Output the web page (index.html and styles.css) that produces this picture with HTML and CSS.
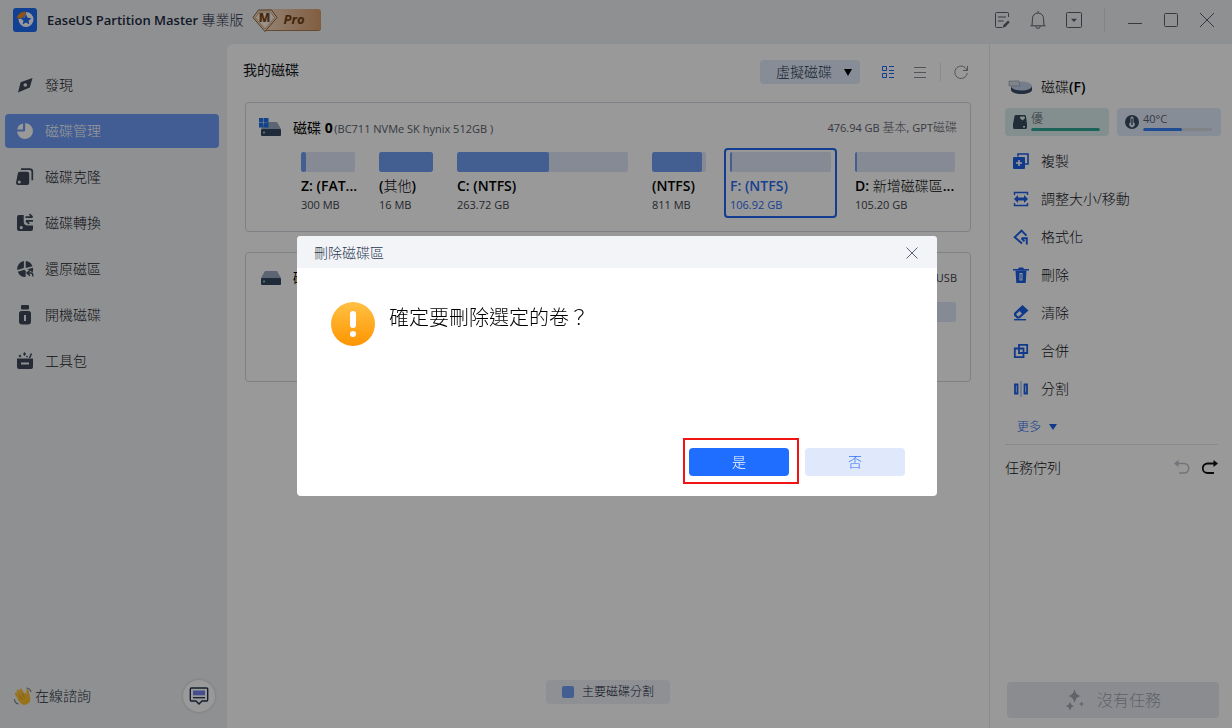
FILE: index.html
```html
<!DOCTYPE html>
<html lang="zh-Hant">
<head>
<meta charset="utf-8">
<title>EaseUS Partition Master</title>
<link rel="stylesheet" href="styles.css">
</head>
<body>
<div class="app">
  <header class="titlebar">
    <svg class="logo" viewBox="0 0 24 24" width="24" height="24"><rect width="24" height="24" rx="3" fill="#1f6bf5"/><circle cx="13" cy="11.500" r="7.500" fill="#fff"/><path d="M13 6.300l1.600 3.500 3.800.4-2.900 2.600.9 3.800-3.400-2-3.400 2 .9-3.800-2.900-2.600 3.800-.4z" fill="#1f6bf5"/><path d="M3.400 10.500A8.600 8.600 0 0 1 12.600 3.400V6L10.800 9.400 7.200 10.500z" fill="#f08a1c" stroke="#1f6bf5" stroke-width=".6"/></svg>
    <h1 class="product">EaseUS Partition Master <span>專業版</span></h1>
    <div class="pro">
      <span class="pro-label">Pro</span>
      <svg class="gem" viewBox="0 0 26 24" width="26" height="24"><path d="M6.500 1h13L25 8.500 13 22.500 1 8.500z" fill="#f7e3d2" stroke="#8a5a30" stroke-width="1"/><path d="M7.300 3h11.400l4 5.700L13 20 3.300 8.700z" fill="#fdf0e4" stroke="#c08a5c" stroke-width=".8"/></svg>
      <b class="gem-letter">M</b>
    </div>
    <div class="window-tools">
      <button aria-label="記錄"><svg viewBox="0 0 20 20" width="20" height="20"><path d="M16.500 7V3.500a1 1 0 0 0-1-1h-11a1 1 0 0 0-1 1v13a1 1 0 0 0 1 1h6M6 7h8M6 11h5.500"/><path d="M10.800 17.500l.6-2.600 4.700-4.400 1.600 1.800-4.500 4.600z" fill="#5b6069" stroke="none"/></svg></button>
      <button aria-label="通知"><svg viewBox="0 0 20 20" width="20" height="20"><path d="M10 1v1.500M2.500 15.800h15M4 15.800l.5-7.300a5.500 5.500 0 0 1 11 0l.5 7.300M7.800 16.200a2.200 2.200 0 0 0 4.400 0"/></svg></button>
      <button aria-label="選單"><svg viewBox="0 0 20 20" width="20" height="20"><rect x="2.500" y="2.500" width="15" height="15" rx="1"/><path d="M7 8.800h6L10 12z" fill="#5b6069" stroke="none"/></svg></button>
      <span class="tool-divider"></span>
      <button aria-label="最小化"><svg viewBox="0 0 20 20" width="20" height="20"><path d="M3 13.500h14"/></svg></button>
      <button aria-label="最大化"><svg viewBox="0 0 20 20" width="20" height="20"><rect x="3.500" y="3.500" width="13" height="13" rx="1"/></svg></button>
      <button aria-label="關閉"><svg viewBox="0 0 20 20" width="20" height="20"><path d="M3 3l14 14M17 3L3 17"/></svg></button>
    </div>
  </header>

  <div class="workspace">
    <nav class="sidebar">
      <ul class="nav-list">
        <li><a class="nav-item" href="#"><svg viewBox="0 0 20 20" width="20" height="20"><path fill-rule="evenodd" d="M17.500 3L14.800 12.600 3 17.500 5.600 7.300zM10.300 8.200a1.800 1.800 0 1 0 0 3.600 1.800 1.800 0 0 0 0-3.600z"/></svg>發現</a></li>
        <li><a class="nav-item active" href="#"><svg viewBox="0 0 20 20" width="20" height="20"><path d="M10.200 2A8 8 0 1 1 2 10.500h6.700a1.500 1.500 0 0 0 1.500-1.500z"/><path d="M8 2.500v5.200a.7.7 0 0 1-.7.700H2.200A7.500 7.500 0 0 1 8 2.500z"/></svg>磁碟管理</a></li>
        <li><a class="nav-item" href="#"><svg viewBox="0 0 20 20" width="20" height="20"><path fill-rule="evenodd" d="M4.800 4.700h7.400a2 2 0 0 1 2 2V16a2 2 0 0 1-2 2H3a2 2 0 0 1-2-2l1.800-9.500a2 2 0 0 1 2-1.800zM4.300 13.600a1.500 1.500 0 1 0 0 3 1.500 1.500 0 0 0 0-3z"/><path d="M6 2.100h8.700a2.600 2.600 0 0 1 2.600 2.500v8.600" fill="none" stroke="#3f4658" stroke-width="1.700"/></svg>磁碟克隆</a></li>
        <li><a class="nav-item" href="#"><svg viewBox="0 0 20 20" width="20" height="20"><path fill-rule="evenodd" d="M4 2h4.700v6.500a4 4 0 0 0 4 4H18V16a2 2 0 0 1-2 2H4a2 2 0 0 1-2-2V4a2 2 0 0 1 2-2zM6.300 13a1.600 1.600 0 1 0 0 3.200 1.600 1.600 0 0 0 0-3.200z"/><path d="M10.500 4.200h7M14.500 1.200l3 3M18 7.800h-7M11 7.800l3.300 3" fill="none" stroke="#3f4658" stroke-width="1.700"/></svg>磁碟轉換</a></li>
        <li><a class="nav-item" href="#"><svg viewBox="0 0 20 20" width="20" height="20"><path d="M8.900 2v6.300a1 1 0 0 1-.7 1L2.200 11A8 8 0 0 1 8.900 2zM10.700 2a8 8 0 0 1 6.800 5.300L10.700 9zM2.800 12.700l6.700-2 1.300 1.600-.3 5.700A8 8 0 0 1 2.800 12.700zM12 10.200l6-1.400a8 8 0 0 1-.4 4.600l-3.200-2.500z"/><path d="M12.500 14h3.700c1.200 0 1.700 1.500 1.700 3.600M15 11.400L12 14l3 2.800" fill="none" stroke="#3f4658" stroke-width="1.400"/></svg>還原磁區</a></li>
        <li><a class="nav-item" href="#"><svg viewBox="0 0 20 20" width="20" height="20"><rect x="6" y="0" width="8" height="4.500" rx="1"/><path fill-rule="evenodd" d="M6.500 6h7A2.500 2.500 0 0 1 16 8.500v8a3 3 0 0 1-3 3H7a3 3 0 0 1-3-3v-8A2.500 2.500 0 0 1 6.500 6zM9 10v6h2v-6z"/></svg>開機磁碟</a></li>
        <li><a class="nav-item" href="#"><svg viewBox="0 0 20 20" width="20" height="20"><path fill-rule="evenodd" d="M2 7.500h16V16a2 2 0 0 1-2 2H4a2 2 0 0 1-2-2zM6 11.500v2h8v-2z"/><path d="M14.500 7l2-4.500" fill="none" stroke="#3f4658" stroke-width="1.500"/><path d="M5 3.500l1.500 1.500L5 6.500 3.500 5zM9.500 1l1.600 2-1.600 2L8 3zM12 4.500l1 1-1 1-1-1z"/></svg>工具包</a></li>
      </ul>
      <div class="support">
        <span class="support-text"><svg viewBox="0 0 20 20" width="20" height="20"><g transform="rotate(-30 10 11)" fill="#fcc02e"><rect x="4.500" y="3.500" width="2.600" height="10" rx="1.300"/><rect x="7.400" y="1.800" width="2.600" height="12" rx="1.300"/><rect x="10.300" y="2.300" width="2.600" height="12" rx="1.300"/><path d="M4.500 8.500h9.200l1 1.500 1.500-3.200c1-1.300 2.400-.4 2 1l-2.200 6.500a5.800 5.800 0 0 1-11.500-.3z"/></g><path d="M5.500 8.500l3.800 5M8 6.700l3.800 5" stroke="#dd8b12" stroke-width=".7"/><path d="M1.500 13c0 2.500 1.500 4.500 4 5M13.500 2c2.500.300 4 1.800 4.500 4" fill="none" stroke="#7d8694" stroke-width="1.200"/></svg>在線諮詢</span>
        <button class="chat" aria-label="訊息"><svg viewBox="0 0 20 20" width="20" height="20"><path d="M2.500 2h15a1.200 1.200 0 0 1 1.200 1.200v10.600A1.200 1.200 0 0 1 17.500 15H13l-3 3-3-3H2.500a1.200 1.200 0 0 1-1.200-1.200V3.200A1.200 1.200 0 0 1 2.500 2z" fill="none" stroke="#26304c" stroke-width="1.400"/><path d="M4 4.500h12v4.800H4z" fill="#7481ee"/><path d="M4 11.700h12" stroke="#26304c" stroke-width="1.300"/></svg></button>
      </div>
    </nav>

    <main class="main">
      <div class="toolbar">
        <h2 class="section-title">我的磁碟</h2>
        <div class="select-wrap">
          <select class="virtual" aria-label="虛擬磁碟"><option>虛擬磁碟</option></select>
          <svg class="caret" viewBox="0 0 8 7" width="8" height="7"><path d="M0 0h8L4 7z"/></svg>
        </div>
        <button class="icon-btn" aria-label="卡片檢視"><svg viewBox="0 0 14 14" width="14" height="14" fill="none" stroke="#1f66f0"><path d="M1.500 1.500h4v4h-4zM1.500 8.500h4v4h-4zM8 1.500h5M8 5.500h5M8 8.500h5M8 12.500h5"/></svg></button>
        <button class="icon-btn" aria-label="清單檢視"><svg viewBox="0 0 14 14" width="14" height="14" fill="none" stroke="#858a92"><path d="M1 2.500h12M1 7.500h12M1 12.500h12"/></svg></button>
        <span class="bar-divider"></span>
        <button class="icon-btn" aria-label="重新整理"><svg viewBox="0 0 14 14" width="14" height="14" fill="none" stroke="#858a92"><path d="M12.800 5A6.200 6.200 0 1 0 13.200 8M13.500 1v4.500H9"/></svg></button>
      </div>

      <div class="disks">
        <section class="disk">
          <div class="disk-head">
            <svg viewBox="0 0 24 20" width="24" height="20"><path d="M6 4h12l4 7H2z" fill="#9aa9c0"/><rect x="2" y="11" width="20" height="7" rx="1" fill="#364860"/><circle cx="5" cy="14.500" r="1" fill="#8fe0c8"/><path d="M0 0h4.500v4.500H0zM5 0h4.500v4.500H5zM0 5h4.500v4.500H0zM5 5h4.500v4.500H5z" fill="#1f72e8"/></svg>
            <h3 class="disk-name">磁碟 <b>0</b> <small>(BC711 NVMe SK hynix 512GB )</small></h3>
            <span class="disk-info">476.94 GB <span>基本</span>, GPT<span>磁碟</span></span>
          </div>
          <ul class="parts">
            <li class="part"><span class="bar"><i style="width:10%"></i></span><b class="part-name">Z: (FAT...</b><span class="size">300 MB</span></li>
            <li class="part"><span class="bar"><i style="width:100%"></i></span><b class="part-name">(<span>其他</span>)</b><span class="size">16 MB</span></li>
            <li class="part"><span class="bar"><i style="width:54%"></i></span><b class="part-name">C: (NTFS)</b><span class="size">263.72 GB</span></li>
            <li class="part"><span class="bar"><i style="width:92%"></i></span><b class="part-name">(NTFS)</b><span class="size">811 MB</span></li>
            <li class="part selected"><span class="bar"><i style="width:2%"></i></span><b class="part-name">F: (NTFS)</b><span class="size">106.92 GB</span></li>
            <li class="part"><span class="bar"><i style="width:2%"></i></span><b class="part-name">D: <span>新增磁碟區</span>...</b><span class="size">105.20 GB</span></li>
          </ul>
        </section>
        <section class="disk">
          <div class="disk-head">
            <svg viewBox="0 0 24 20" width="24" height="20"><path d="M6 3h12l4 7H2z" fill="#9aa9c0"/><rect x="2" y="10" width="20" height="7" rx="1" fill="#364860"/><circle cx="5" cy="13.500" r="1" fill="#8fe0c8"/></svg>
            <h3 class="disk-name">磁碟 <b>1</b></h3>
            <span class="disk-info dark">USB</span>
          </div>
          <div class="single"><span class="bar"></span></div>
        </section>
      </div>
      <div class="legend"><i></i>主要磁碟分割</div>
    </main>

    <aside class="panel">
      <h2 class="panel-title"><svg viewBox="0 0 24 18" width="24" height="18"><path d="M3 9v3c0 2 4.500 4 10.500 4s10.500-2 10.500-4V8z" fill="#3a4d68"/><ellipse cx="13.500" cy="8" rx="10.500" ry="4.500" fill="#c3d2ea"/><path d="M1 3h10l1 5H1z" fill="#d6dce6" stroke="#8994a6" stroke-width=".6"/></svg><span>磁碟<b>(F)</b></span></h2>
      <div class="stats">
        <div class="stat good"><svg viewBox="0 0 16 16" width="16" height="16"><path fill-rule="evenodd" d="M4 1h8.500a1.500 1.500 0 0 1 1.500 1.200l1 7.800v3.500a1.500 1.500 0 0 1-1.500 1.500h-11A1.500 1.500 0 0 1 1 13.500V10l1.500-7.800A1.500 1.500 0 0 1 4 1zM10.500 6.500L12.700 4.400a1.300 1.300 0 0 0-2.200-1.400 1.300 1.300 0 0 0-2.200 1.400zM11 12v1.500h2V12z"/></svg><div class="stat-body"><span>優</span><span class="meter"><i style="width:100%"></i></span></div></div>
        <div class="stat heat"><svg viewBox="0 0 16 16" width="16" height="16"><circle cx="8" cy="8" r="7"/><path d="M6.500 4a1.500 1.500 0 0 1 3 0v4.200a2.700 2.700 0 1 1-3 0z" fill="#e2ebfc"/><path d="M8 4.500v6.500" stroke="#3a4c62" stroke-width="1.400"/></svg><div class="stat-body"><span>40°C</span><span class="meter"><i style="width:57%"></i></span></div></div>
      </div>
      <ul class="actions">
        <li><button><svg viewBox="0 0 16 16" width="16" height="16"><path d="M5 3.500V1h10v10h-3" fill="none" stroke="#1d5fe6" stroke-width="1.600"/><path fill-rule="evenodd" d="M1 4h10a1 1 0 0 1 1 1v10a1 1 0 0 1-1 1H1a1 1 0 0 1-1-1V5a1 1 0 0 1 1-1zM5.200 7v2.200H3v1.600h2.200V13h1.600v-2.200H9V9.200H6.800V7z"/></svg>複製</button></li>
        <li><button><svg viewBox="0 0 16 16" width="16" height="16"><path d="M1.500 4V1.500h13V4M1.500 12v2.500h13V12" fill="none" stroke="#1d5fe6" stroke-width="1.400"/><path d="M1 8l4-4v2.500h6V4l4 4-4 4V9.500H5V12z"/></svg>調整大小/移動</button></li>
        <li><button><svg viewBox="0 0 16 16" width="16" height="16"><path d="M9 14.500L1.700 8.200 8.500 1.700l5 5M13.800 15.500V9.300H8.500M8.500 9.300l3 3" fill="none" stroke="#1d5fe6" stroke-width="1.900"/></svg>格式化</button></li>
        <li><button><svg viewBox="0 0 16 16" width="16" height="16"><path d="M0 2h5L6 .500h4L11 2h5v1.400H0z"/><path fill-rule="evenodd" d="M2.500 3.400h11L12.700 16H3.300zM6.500 6v7.500h3V6z"/><path d="M7.500 7h1v5.500h-1z"/></svg>刪除</button></li>
        <li><button><svg viewBox="0 0 16 16" width="16" height="16"><path fill-rule="evenodd" d="M9.500 0L15.500 5.500 6.500 13.500H4L1 10.500V8zM6.500 6l-3.500 3.300 2.300 2.400L9 8.500z"/><path d="M1 14h12v1.400H1z"/></svg>清除</button></li>
        <li><button><svg viewBox="0 0 16 16" width="16" height="16"><path d="M6 1.800h8.200V10H6zM1.800 5.500h8.700v8.700H1.800z" fill="none" stroke="#1d5fe6" stroke-width="1.800"/></svg>合併</button></li>
        <li><button><svg viewBox="0 0 16 16" width="16" height="16"><path d="M2 3.500h2.500v9H2zM11.500 3.500H14v9h-2.500z" fill="none" stroke="#1d5fe6" stroke-width="1.800"/><path d="M8 0v16" stroke="#7ba3f2"/></svg>分割</button></li>
      </ul>
      <button class="more">更多 <svg viewBox="0 0 8 6" width="8" height="6"><path d="M0 0h8L4 6z"/></svg></button>
      <div class="queue">
        <h3>任務佇列</h3>
        <button aria-label="復原"><svg viewBox="0 0 16 16" width="16" height="16" fill="none" stroke="#bfc3ca" stroke-width="1.600"><path d="M2.500 3.500H10a4.500 4.500 0 0 1 0 9.500H5"/><path d="M0 3.500l4.500-3.500v7z" fill="#bfc3ca" stroke="none"/></svg></button>
        <button aria-label="重做"><svg viewBox="0 0 16 16" width="16" height="16" fill="none" stroke="#0d0f12" stroke-width="1.800"><path d="M13.500 3.500H5.500a4.500 4.500 0 0 0 0 9.500H12"/><path d="M16 3.500L11.500 0v7z" fill="#0d0f12" stroke="none"/></svg></button>
      </div>
      <button class="run" disabled><svg viewBox="0 0 20 22" width="20" height="22"><path d="M9.500 0q1 6 6.500 7-5.500 1-6.500 7-1-6-6.500-7 5.500-1 6.500-7zM5 12.500q.8 4 4.500 4.500Q5.800 17.500 5 22 4.200 17.500.500 17 4.200 16.500 5 12.500zM16.500 12.500q.5 2.300 2.500 2.500-2 .3-2.500 2.500-.4-2.200-2.500-2.500 2.100-.2 2.500-2.500z" fill="#a2a6af"/></svg>沒有任務</button>
    </aside>
  </div>
</div>

<div class="overlay">
  <div class="dialog" role="dialog" aria-labelledby="dlg-title">
    <div class="dialog-head">
      <h2 id="dlg-title">刪除磁碟區</h2>
      <button aria-label="關閉"><svg viewBox="0 0 12 12" width="12" height="12"><path d="M.5.500l11 11M11.500.500l-11 11" stroke="#596273" fill="none"/></svg></button>
    </div>
    <div class="dialog-body">
      <svg viewBox="0 0 44 44" width="44" height="44"><defs><linearGradient id="warn" x1="0" y1="0" x2="0" y2="1"><stop offset="0" stop-color="#ffc044"/><stop offset="1" stop-color="#ff9500"/></linearGradient></defs><circle cx="22" cy="22" r="22" fill="url(#warn)"/><rect x="19" y="9" width="6" height="17" rx="3" fill="#fff"/><circle cx="22" cy="32" r="3" fill="#fff"/></svg>
      <p>確定要刪除選定的卷？</p>
    </div>
    <div class="dialog-foot">
      <button class="yes">是</button>
      <button class="no">否</button>
    </div>
  </div>
</div>
</body>
</html>
```

FILE: styles.css
```css
* { box-sizing: border-box; }
body, h1, h2, h3, p, ul { margin: 0; padding: 0; }
ul { list-style: none; }
body {
  font: 300 14px/20px "Open Sans", "Noto Sans CJK TC", sans-serif;
  color: #14171d;
}
button {
  border: 0; padding: 0; background: none; font: inherit; color: inherit;
  display: flex; align-items: center; justify-content: center;
}
svg { display: block; flex: none; }
h1, h2, h3 { font: inherit; }

.app { min-height: 100vh; display: flex; flex-direction: column; background: #eef1f4; }

.titlebar { height: 44px; padding: 0 15px 4px 13px; display: flex; align-items: center; flex: none; }
.product { margin-left: 10px; font-size: 13px; font-weight: 600; color: #1d2b42; white-space: nowrap; }
.product span { font-size: 14px; font-weight: 300; }
.pro { position: relative; margin-left: 8px; display: flex; padding-left: 12px; }
.gem { position: absolute; left: 0; top: 0; }
.gem-letter { position: absolute; left: 0; top: 0; width: 26px; line-height: 18px; text-align: center; font-size: 12px; font-weight: 800; color: #7b4718; }
.pro-label {
  width: 57px; height: 22px; padding-left: 20px; border-radius: 3px;
  background: linear-gradient(90deg, #f6d9c2, #d89c6a); border-bottom: 1px solid #a8794d;
  font-size: 13px; font-weight: 700; font-style: italic; color: #6f3e13;
}
.window-tools { margin-left: auto; display: flex; align-items: center; gap: 16px; }
.window-tools svg { fill: none; stroke: #5b6069; }
.tool-divider { width: 1px; height: 24px; margin: 0 4px; background: #dadde2; }

.workspace { flex: 1; display: flex; }

.sidebar { width: 227px; flex: none; padding: 24px 8px 16px 5px; display: flex; flex-direction: column; }
.nav-list { display: flex; flex-direction: column; gap: 12px; }
.nav-item {
  display: flex; align-items: center; gap: 10px; height: 34px; padding: 0 10px;
  border-radius: 4px; color: #1c2129; text-decoration: none;
}
.nav-item svg { fill: #3f4658; }
.nav-item.active { background: #6d9bf5; color: #fff; }
.nav-item.active svg { fill: #fff; }
.support { margin-top: auto; padding: 0 4px 0 8px; display: flex; align-items: center; justify-content: space-between; }
.support-text { display: flex; align-items: center; gap: 2px; color: #262c36; }
.chat { width: 32px; height: 32px; border-radius: 50%; background: #fff; box-shadow: 0 0 3px rgba(40, 50, 70, .25); }

.main {
  flex: 1; min-width: 0; padding: 16px 18px 24px; background: #fff; border-radius: 6px 0 0 0;
  display: flex; flex-direction: column;
}
.toolbar { height: 24px; margin: 0 0 18px -2px; padding-right: 3px; display: flex; align-items: center; gap: 18px; }
.section-title { margin-right: auto; align-self: flex-start; font-weight: 400; }
.select-wrap { position: relative; margin-right: 3px; }
.virtual {
  appearance: none; display: block; width: 100px; height: 24px; padding: 0 16px; border: 0; border-radius: 4px;
  background: #e2ebfb; font: inherit; color: #26344d;
}
.caret { position: absolute; right: 8px; top: 9px; pointer-events: none; }
.bar-divider { width: 1px; height: 20px; margin: 0 -5px; background: #e4e6ea; }

.disks { display: flex; flex-direction: column; gap: 20px; }
.disk { min-height: 130px; padding: 13px 14px 17px 13px; border: 1px solid #d3d7de; border-radius: 4px; }
.disk-head { display: flex; align-items: center; height: 24px; }
.disk-name { margin-left: 10px; font-weight: 400; color: #000; }
.disk-name b { font-weight: 700; }
.disk-name small { margin-left: -2px; font-size: 11px; color: #5a606b; }
.disk-info { margin-left: auto; margin-right: -1px; font-size: 11px; font-weight: 400; color: #5a606b; }
.disk-info span { font-size: 12px; font-weight: 300; }
.disk-info.dark { color: #3d4148; }
.parts {
  display: grid; gap: 24px; margin: 12px 1px 0 42px;
  grid-template-columns: 54fr 54fr 171fr 54fr 101fr 100fr;
}
.part { position: relative; min-width: 0; display: flex; flex-direction: column; }
.bar { display: block; height: 20px; border-radius: 2px; overflow: hidden; background: #dfe7f8; }
.bar i { display: block; height: 100%; border-radius: 2px; background: #709df2; }
.part-name { margin-top: 4px; font-weight: 600; color: #000; white-space: nowrap; }
.part-name span { font-weight: 300; }
.size { font-size: 11px; line-height: 18px; font-weight: 400; color: #3d424c; }
.selected::after { content: ""; position: absolute; inset: -4px -6px; border: 2px solid #1f66f0; border-radius: 4px; }
.selected .part-name, .selected .size { color: #2a6af0; }
.single { margin: 12px 0 0 42px; }
.legend {
  align-self: center; margin: auto 0 0; height: 24px; padding: 0 16px; border-radius: 4px;
  display: flex; align-items: center; gap: 8px; background: #eef1f5; font-size: 12px; color: #14203a;
}
.legend i { width: 12px; height: 12px; border-radius: 2px; background: #709df2; }

.panel {
  width: 243px; flex: none; padding: 33px 11px 10px 15px; border-left: 1px solid #e6e8ec; background: #fff;
  display: flex; flex-direction: column;
}
.panel-title { display: flex; align-items: center; gap: 9px; height: 20px; padding-left: 3px; color: #000; }
.panel-title b { font-weight: 600; }
.stats { display: grid; grid-template-columns: 1fr 1fr; gap: 8px; margin-top: 11px; }
.stat { display: flex; align-items: center; gap: 3px; height: 28px; padding: 0 9px 0 7px; border-radius: 4px; font-size: 11px; font-weight: 400; color: #5f646e; }
.stat svg { fill: #3a4c62; }
.stat-body { flex: 1; display: flex; flex-direction: column; gap: 2px; line-height: 14px; padding-bottom: 2px; }
.meter { height: 3px; border-radius: 2px; background: #d5d9e0; overflow: hidden; }
.meter i { display: block; height: 100%; border-radius: 2px; }
.good { background: #dbefee; font-size: 12px; font-weight: 300; }
.good i { background: #2fa596; }
.heat { background: #e2ebfb; }
.heat i { background: #347ff3; }
.actions { margin-top: 6px; }
.actions button { width: 100%; height: 38px; padding-left: 8px; justify-content: flex-start; gap: 12px; }
.actions svg { fill: #1d5fe6; }
.more { align-self: flex-start; height: 18px; margin: 10px 0 8px 12px; gap: 8px; font-size: 12px; color: #2a68ea; }
.more svg { fill: #1d5fe6; }
.queue { display: flex; align-items: center; gap: 12px; height: 46px; margin-right: 3px; border-top: 1px solid #e2e4e8; }
.queue h3 { margin-right: auto; }
.run {
  height: 36px; margin: auto 2px 0; border-radius: 4px; gap: 12px;
  background: #e6e9f1; font-size: 16px; color: #a2a6af;
}

.overlay {
  position: fixed; inset: 0; padding: 4px 0 0 2px; background: rgba(0, 0, 0, .4);
  display: flex; align-items: center; justify-content: center;
}
.dialog {
  width: 640px; min-height: 260px; border-radius: 4px; overflow: hidden; background: #fff;
  display: flex; flex-direction: column;
}
.dialog-head {
  height: 32px; padding: 2px 19px 0 17px; display: flex; align-items: center; justify-content: space-between;
  background: #f2f4f8; color: #2c3a52;
}
.dialog-body { display: flex; gap: 14px; padding: 34px; }
.dialog-body p { font-size: 20px; line-height: 32px; color: #000; }
.dialog-foot { margin-top: auto; padding: 0 32px 20px; display: flex; justify-content: flex-end; gap: 16px; }
.dialog-foot button { position: relative; width: 100px; height: 28px; border-radius: 4px; }
.yes { background: #1f6eff; color: #fff; }
.yes::after { content: ""; position: absolute; inset: -10px -10px -8px -6px; border: 2px solid #f01414; }
.no { background: #e0e9fc; color: #2f6ff2; }
```
